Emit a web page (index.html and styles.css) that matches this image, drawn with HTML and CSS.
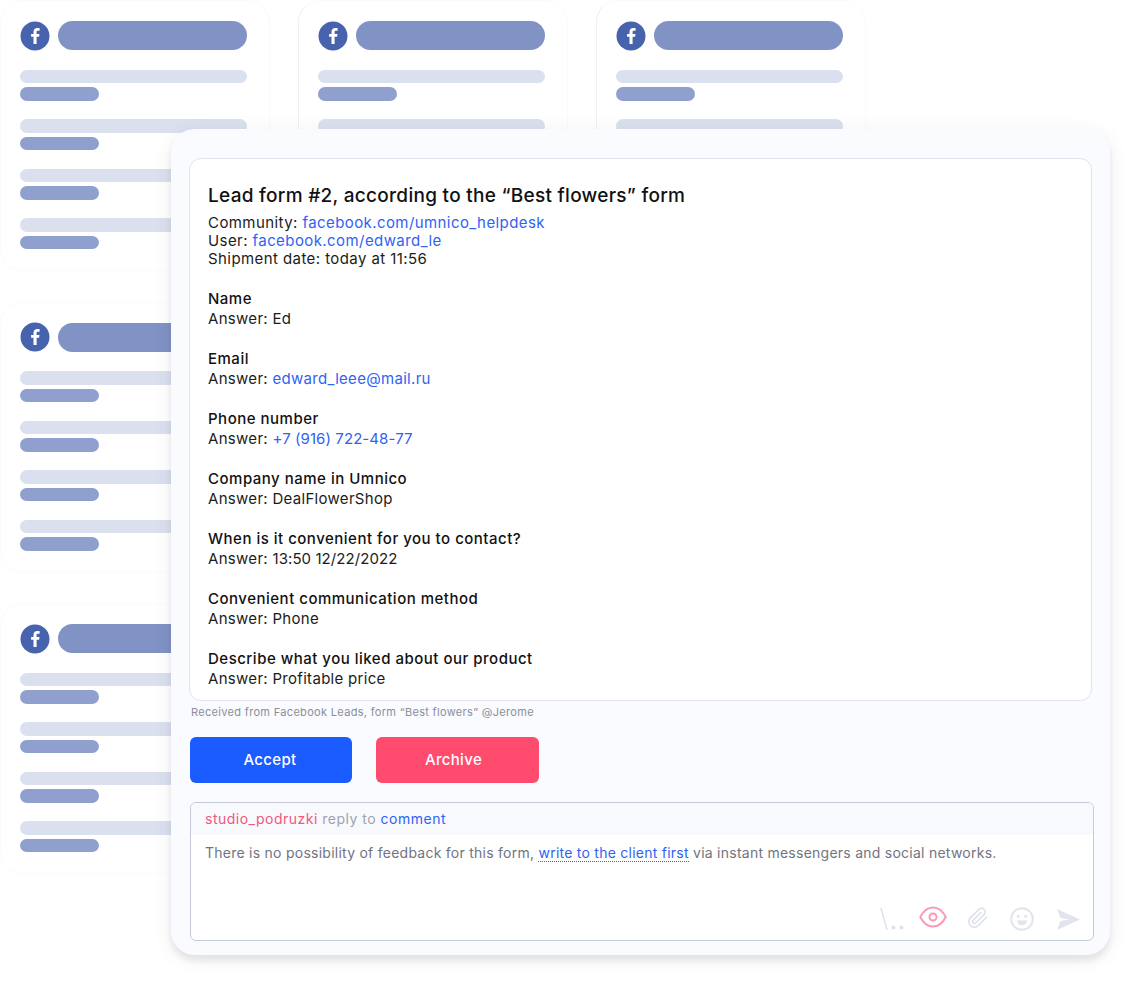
FILE: index.html
```html
<!DOCTYPE html>
<html lang="en">
<head>
<meta charset="utf-8">
<title>Lead form</title>
<link rel="stylesheet" href="styles.css">
</head>
<body>
<main class="stage">
  <section class="cards">
    <article class="card">
      <div class="card-head"><svg class="fb" viewBox="0 0 30 30"><circle cx="15" cy="15" r="14.5" fill="#4863ae"/><path d="M16.600 23v-7.200h2.500l.4-2.900h-2.900v-1.700c0-.9.3-1.400 1.400-1.400h1.600V7.200c-.3 0-1.200-.1-2.300-.1-2.300 0-3.800 1.400-3.800 3.900v1.900h-2.400v2.900h2.400V23z" fill="#fff"/></svg><span class="pill"></span></div>
      <div class="line-group"><span class="line-long"></span><span class="line-short"></span></div>
      <div class="line-group"><span class="line-long"></span><span class="line-short"></span></div>
      <div class="line-group"><span class="line-long"></span><span class="line-short"></span></div>
      <div class="line-group"><span class="line-long"></span><span class="line-short"></span></div>
    </article>
    <article class="card card-side">
      <div class="card-head"><svg class="fb" viewBox="0 0 30 30"><circle cx="15" cy="15" r="14.5" fill="#4863ae"/><path d="M16.600 23v-7.200h2.500l.4-2.900h-2.900v-1.700c0-.9.3-1.400 1.400-1.400h1.600V7.200c-.3 0-1.200-.1-2.300-.1-2.300 0-3.800 1.400-3.800 3.900v1.900h-2.400v2.900h2.400V23z" fill="#fff"/></svg><span class="pill"></span></div>
      <div class="line-group"><span class="line-long"></span><span class="line-short"></span></div>
      <div class="line-group"><span class="line-long"></span><span class="line-short"></span></div>
    </article>
    <article class="card card-side">
      <div class="card-head"><svg class="fb" viewBox="0 0 30 30"><circle cx="15" cy="15" r="14.5" fill="#4863ae"/><path d="M16.600 23v-7.200h2.500l.4-2.900h-2.900v-1.700c0-.9.3-1.400 1.400-1.400h1.600V7.200c-.3 0-1.200-.1-2.300-.1-2.300 0-3.800 1.400-3.800 3.900v1.900h-2.400v2.900h2.400V23z" fill="#fff"/></svg><span class="pill"></span></div>
      <div class="line-group"><span class="line-long"></span><span class="line-short"></span></div>
      <div class="line-group"><span class="line-long"></span><span class="line-short"></span></div>
    </article>
    <article class="card card-first">
      <div class="card-head"><svg class="fb" viewBox="0 0 30 30"><circle cx="15" cy="15" r="14.5" fill="#4863ae"/><path d="M16.600 23v-7.200h2.500l.4-2.900h-2.900v-1.700c0-.9.3-1.400 1.400-1.400h1.600V7.200c-.3 0-1.200-.1-2.300-.1-2.300 0-3.800 1.400-3.800 3.900v1.900h-2.400v2.900h2.400V23z" fill="#fff"/></svg><span class="pill"></span></div>
      <div class="line-group"><span class="line-long"></span><span class="line-short"></span></div>
      <div class="line-group"><span class="line-long"></span><span class="line-short"></span></div>
      <div class="line-group"><span class="line-long"></span><span class="line-short"></span></div>
      <div class="line-group"><span class="line-long"></span><span class="line-short"></span></div>
    </article>
    <article class="card card-first">
      <div class="card-head"><svg class="fb" viewBox="0 0 30 30"><circle cx="15" cy="15" r="14.5" fill="#4863ae"/><path d="M16.600 23v-7.200h2.500l.4-2.900h-2.900v-1.700c0-.9.3-1.400 1.400-1.400h1.600V7.200c-.3 0-1.200-.1-2.300-.1-2.300 0-3.800 1.400-3.800 3.900v1.900h-2.400v2.900h2.400V23z" fill="#fff"/></svg><span class="pill"></span></div>
      <div class="line-group"><span class="line-long"></span><span class="line-short"></span></div>
      <div class="line-group"><span class="line-long"></span><span class="line-short"></span></div>
      <div class="line-group"><span class="line-long"></span><span class="line-short"></span></div>
      <div class="line-group"><span class="line-long"></span><span class="line-short"></span></div>
    </article>
  </section>

  <section class="modal">
    <div class="lead">
      <h1 class="lead-title">Lead form #2, according to the “Best flowers” form</h1>
      <div class="meta">
        <div>Community: <a class="link">facebook.com/umnico_helpdesk</a></div>
        <div>User: <a class="link">facebook.com/edward_le</a></div>
        <div>Shipment date: today at 11:56</div>
      </div>
      <div class="qa"><div class="q">Name</div><div class="a">Answer: Ed</div></div>
      <div class="qa"><div class="q">Email</div><div class="a">Answer: <a class="link">edward_leee@mail.ru</a></div></div>
      <div class="qa"><div class="q">Phone number</div><div class="a">Answer: <a class="link digits">+7 (916) 722-48-77</a></div></div>
      <div class="qa"><div class="q">Company name in Umnico</div><div class="a">Answer: DealFlowerShop</div></div>
      <div class="qa"><div class="q">When is it convenient for you to contact?</div><div class="a">Answer: <span class="digits">13:50 12/22/2022</span></div></div>
      <div class="qa"><div class="q">Convenient communication method</div><div class="a">Answer: Phone</div></div>
      <div class="qa"><div class="q">Describe what you liked about our product</div><div class="a">Answer: Profitable price</div></div>
    </div>
    <p class="source">Received from Facebook Leads, form “Best flowers” @Jerome</p>
    <div class="actions">
      <button class="btn btn-accept">Accept</button>
      <button class="btn btn-archive">Archive</button>
    </div>
    <div class="reply">
      <div class="reply-head"><span class="author">studio_podruzki</span> reply to <a class="link">comment</a></div>
      <p class="reply-text">There is no possibility of feedback for this form, <a class="link underlined">write to the client first</a> via instant messengers and social networks.</p>
      <div class="tools">
        <svg class="tool slash" viewBox="0 0 25 24"><path d="M1 1.500l6 21" fill="none" stroke="#dfe2ea" stroke-width="1.500" stroke-linecap="round"/><circle cx="13.500" cy="20.500" r="2" fill="#dfe2ea"/><circle cx="21.500" cy="20.500" r="2" fill="#dfe2ea"/></svg>
        <svg class="tool eye" viewBox="0 0 28 22" fill="none" stroke="#fb9ab3" stroke-width="2"><path d="M1.300 11C4.500 4.500 9 1.500 14 1.500S23.500 4.500 26.700 11C23.500 17.500 19 20.500 14 20.500S4.500 17.500 1.300 11z"/><circle cx="14" cy="11" r="3.500"/></svg>
        <svg class="tool clip" viewBox="0 0 24 24" fill="none" stroke="#e1e4ed" stroke-width="2" stroke-linecap="round" stroke-linejoin="round"><path d="M21.440 11.050l-9.190 9.190a6 6 0 0 1-8.490-8.490l9.190-9.190a4 4 0 0 1 5.660 5.660l-9.200 9.190a2 2 0 0 1-2.830-2.830l8.490-8.480"/></svg>
        <svg class="tool smile" viewBox="0 0 24 24" fill="none" stroke="#e1e4ed" stroke-width="2"><circle cx="12" cy="12" r="10.800"/><circle cx="8.300" cy="9.300" r="1.500" fill="#e1e4ed" stroke="none"/><circle cx="15.700" cy="9.300" r="1.500" fill="#e1e4ed" stroke="none"/><path d="M7 13.500h10c-.4 3-2.300 4.800-5 4.800s-4.600-1.800-5-4.800z" fill="#e1e4ed" stroke="none"/></svg>
        <svg class="tool send" viewBox="0 0 24 22"><path d="M0 0l24 11L0 22l3.500-9.500L13 11 3.500 9.500z" fill="#e1e4ed"/></svg>
      </div>
    </div>
  </section>
</main>
</body>
</html>
```
FILE: styles.css
```css
* { box-sizing: border-box; }
html, body { margin: 0; padding: 0; background: #fff; }
body { font-family: Inter, "Liberation Sans", sans-serif; color: #1b1c20; }
.stage { position: relative; width: 1131px; height: 983px; overflow: hidden; }

.cards { display: grid; grid-template-columns: repeat(3, 270px); grid-auto-rows: 271px; column-gap: 28px; row-gap: 30.500px; }
.card { padding: 19.500px 19px; border: 1px solid #fbfbfd; border-radius: 22px; }
.card-side { border-left-color: #eef0f5; }
.card-first { grid-column: 1; }
.card-head { display: flex; align-items: center; gap: 8px; margin: 0 0 19px; }
.fb { width: 30px; height: 30px; flex: none; }
.pill { width: 189px; height: 29px; border-radius: 15px; background: #8193c5; }
.line-group { display: flex; flex-direction: column; gap: 4px; margin-bottom: 18.500px; }
.line-long { width: 227px; height: 13.500px; border-radius: 7px; background: #dbe0ef; }
.line-short { width: 79px; height: 13.500px; border-radius: 7px; background: #90a0ce; }

.modal { position: absolute; left: 171px; top: 129px; width: 939px; height: 826px; padding: 29px 18px 0 18px; background: #f9fbfe; border-radius: 24px; box-shadow: 0 6px 6px rgba(30, 30, 40, .08), 0 3px 20px rgba(30, 30, 40, .07); }
.lead { height: 543px; padding: 26px 18px 0; background: #fff; border: 1px solid #dfe4f0; border-radius: 12px; overflow: hidden; }
.lead-title { margin: 0 0 7px; font-size: 19px; line-height: 22px; font-weight: 500; letter-spacing: .28px; color: #111; }
.meta { font-size: 15px; line-height: 18px; letter-spacing: .42px; }
.qa { font-size: 15px; line-height: 20px; }
.meta + .qa { margin-top: 21px; }
.qa + .qa { margin-top: 20px; }
.q { font-weight: 500; letter-spacing: .5px; color: #111; }
.a { letter-spacing: .3px; }
.link { color: #2f62f5; text-decoration: none; }
.digits { letter-spacing: .08px; }

.source { margin: 4px 0 0 2px; font-size: 11px; line-height: 14px; letter-spacing: .32px; color: #8b8f9c; }
.actions { display: flex; gap: 24px; margin: 18px 0 0 1px; }
.btn { width: 162px; height: 46px; padding: 0 2px 2px 0; border: 0; border-radius: 6px; color: #fff; font: 500 15px Inter, "Liberation Sans", sans-serif; letter-spacing: .35px; }
.btn-accept { background: #1a5cff; }
.btn-archive { width: 163px; padding-right: 8px; background: #ff4b6e; }

.reply { position: relative; width: 904px; height: 139px; margin: 19px 0 0 1px; background: #fff; border: 1px solid #c5cadb; border-radius: 6px; overflow: hidden; font-size: 14px; }
.reply-head { height: 32px; padding: 7px 14px 0; line-height: 18px; letter-spacing: .5px; background: #f7f9fd; color: #a0a3ad; }
.author { color: #f0587d; }
.reply-text { margin: 9px 14px 0; line-height: 18px; letter-spacing: .25px; color: #71747f; }
.underlined { border-bottom: 1px dotted #2f62f5; }
.tools { position: absolute; right: 13px; bottom: 8px; display: flex; align-items: center; gap: 20px; }
.tool { display: block; }
.slash { width: 25px; height: 24px; margin-right: -6px; }
.eye { width: 28px; height: 22px; margin-bottom: 4px; }
.clip { width: 22px; height: 24px; margin-bottom: 2px; }
.smile { width: 24px; height: 24px; margin-left: 1px; margin-right: 3px; }
.send { width: 23px; height: 21px; }
```
